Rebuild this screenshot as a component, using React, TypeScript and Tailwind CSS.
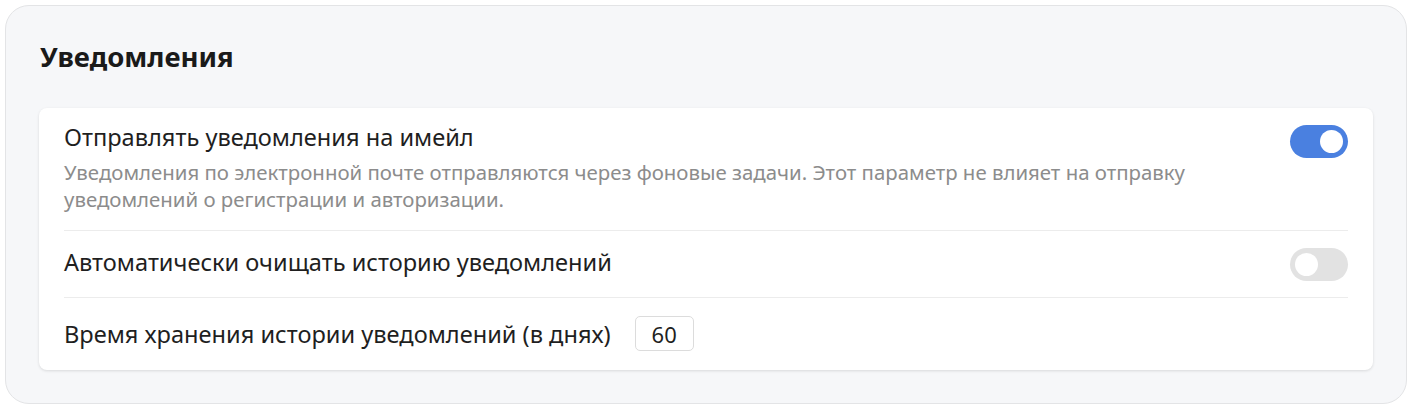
import React, { useState } from 'react';

const Toggle = ({ on, onChange }: { on: boolean; onChange: () => void }) => (
    <button
        type="button"
        onClick={onChange}
        className={`relative w-[58px] h-[33px] rounded-full shrink-0 transition-colors ${on ? 'bg-[#4a80e0]' : 'bg-[#e2e2e2]'}`}
    >
        <span
            className={`absolute top-[5px] w-[23px] h-[23px] rounded-full bg-white transition-all ${on ? 'left-[30px]' : 'left-[5px]'}`}
        />
    </button>
);

export default function App() {
    const [email, setEmail] = useState(true);
    const [autoClear, setAutoClear] = useState(false);
    const [days, setDays] = useState('60');

    return (
        <div className="w-[1412px] h-[409px] p-[5px] bg-white" style={{ fontFamily: `'Noto Sans', 'Open Sans', sans-serif` }}>
            <div className="h-full rounded-[24px] border border-[#e3e4e6] bg-[#f6f7f9] px-[33px] pt-[34px] pb-[34px]">
                <h2 className="text-[27.5px] leading-[34px] font-bold text-[#1a1a1a] px-[1px]">Уведомления</h2>

                <div className="mt-[34px] bg-white rounded-[8px] shadow-[0_1px_3px_rgba(0,0,0,0.12)] px-[25px]">
                    {/* Email notifications */}
                    <div className="flex items-start justify-between pt-[17px] pb-[17px] border-b border-[#ececec]">
                        <div>
                            <div className="text-[23.6px] leading-[28px] text-[#1f1f1f] -mt-[2px] pb-[2px]">Отправлять уведомления на имейл</div>
                            <p className="mt-[6px] text-[20.4px] leading-[27px] text-[#8c8c8c] max-w-[1180px]">
                                Уведомления по электронной почте отправляются через фоновые задачи. Этот параметр не влияет на отправку уведомлений о регистрации и авторизации.
                            </p>
                        </div>
                        <Toggle on={email} onChange={() => setEmail(!email)} />
                    </div>

                    {/* Auto clear */}
                    <div className="flex items-center justify-between h-[67px] border-b border-[#ececec]">
                        <div className="text-[23.6px] leading-[28px] text-[#1f1f1f] pb-[4px]">Автоматически очищать историю уведомлений</div>
                        <Toggle on={autoClear} onChange={() => setAutoClear(!autoClear)} />
                    </div>

                    {/* Retention */}
                    <div className="flex items-center gap-[24px] h-[72px] pb-[1px]">
                        <div className="text-[23.6px] leading-[28px] text-[#1f1f1f]">Время хранения истории уведомлений (в днях)</div>
                        <input
                            value={days}
                            onChange={(e) => setDays(e.target.value)}
                            className="w-[59px] h-[35px] rounded-[5px] border border-[#dcdcdc] text-center text-[22px] text-[#1f1f1f] outline-none"
                        />
                    </div>
                </div>
            </div>
        </div>
    );
}
